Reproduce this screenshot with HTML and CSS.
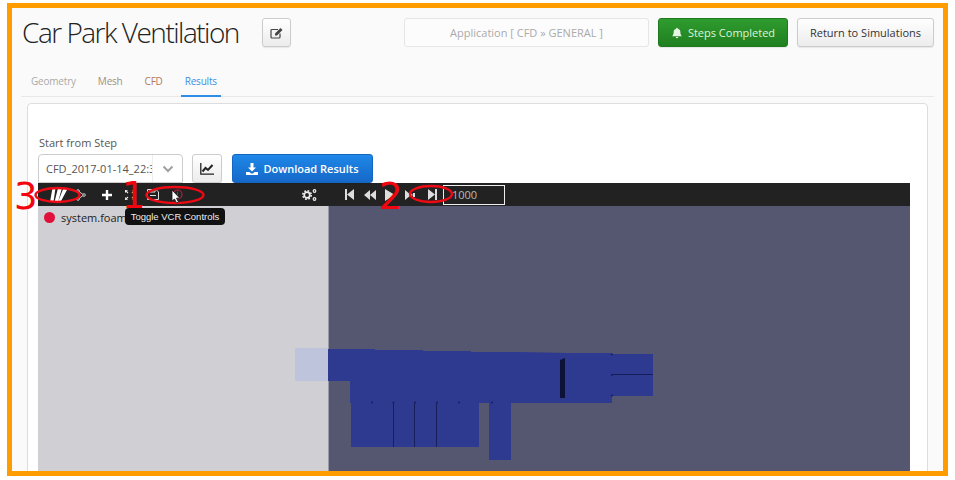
FILE: index.html
```html
<!DOCTYPE html>
<html lang="en">
<head>
<meta charset="utf-8">
<title>Car Park Ventilation</title>
<link rel="stylesheet" href="styles.css">
</head>
<body>
<div class="frame">
  <header class="head">
    <h1 class="title">Car Park Ventilation</h1>
    <button class="btn btn-edit" aria-label="Edit">
      <svg width="14" height="12" viewBox="0 0 14 12"><path d="M10 6.500V10a1 1 0 0 1-1 1H2a1 1 0 0 1-1-1V3.500a1 1 0 0 1 1-1h6" fill="none" stroke="#444" stroke-width="1.200"/><path d="M5 6.500 10.500 1l2 2L7 8.500H5z" fill="#444"/></svg>
    </button>
    <div class="app-field">Application [ CFD » GENERAL ]</div>
    <button class="btn btn-green">
      <svg width="12" height="12" viewBox="0 0 16 16"><path d="M8 1a1.200 1.200 0 0 1 1.100 1.200C11.500 2.800 12.500 4.500 12.500 7c0 2.500.7 4 2 5.200H1.500C2.800 11 3.500 9.500 3.500 7c0-2.500 1-4.200 3.400-4.800A1.200 1.200 0 0 1 8 1zM6.300 13.200h3.400a1.700 1.700 0 0 1-3.400 0z" fill="#e8f5e4"/></svg>
      Steps Completed
    </button>
    <button class="btn btn-return">Return to Simulations</button>
  </header>

  <nav class="tabs">
    <a class="tab tab-geometry">Geometry</a>
    <a class="tab tab-mesh">Mesh</a>
    <a class="tab tab-cfd">CFD</a>
    <a class="tab tab-results">Results</a>
  </nav>

  <main class="panel">
    <div class="label">Start from Step</div>
    <div class="controls">
      <div class="select">
        <span class="select-text">CFD_2017-01-14_22:30:00</span>
        <span class="select-arrow"><svg width="12" height="8" viewBox="0 0 12 8"><path d="M1.500 1.500 6 6l4.500-4.500" fill="none" stroke="#a0a0a0" stroke-width="2"/></svg></span>
      </div>
      <button class="btn btn-chart" aria-label="Chart">
        <svg width="14" height="12" viewBox="0 0 14 12"><path d="M.8 0v11.200H14" fill="none" stroke="#222" stroke-width="1.300"/><path d="M2.500 8.500 5.500 5l2.500 2 4.500-5" fill="none" stroke="#222" stroke-width="2"/></svg>
      </button>
      <button class="btn btn-blue">
        <svg width="12" height="12" viewBox="0 0 12 12"><path d="M4.500 0h3v4.500H10L6 8.500 2 4.500h2.500zM0 9h3.500L5 10.500h2L8.500 9H12v3H0z" fill="#fff"/></svg>
        Download Results
      </button>
    </div>

    <section class="viewer">
      <div class="toolbar">
        <svg class="ti ti-logo" width="18" height="14" viewBox="0 0 18 14"><path d="M2.500 0h3L3.500 14H0zM8 0h4L8 14H4.500zM13.500 0H18L10.500 14H8z" fill="#fff"/></svg>
        <svg class="ti ti-nodes" width="10" height="12" viewBox="0 0 10 12"><g fill="none" stroke="#ccc" stroke-width="1"><circle cx="2" cy="2" r="1.300"/><circle cx="8" cy="6" r="1.300"/><circle cx="2" cy="10" r="1.300"/><path d="M3.200 2.800 6.800 5.200M3.200 9.200 6.800 6.800"/></g></svg>
        <svg class="ti ti-plus" width="10" height="10" viewBox="0 0 10 10"><path d="M3.800 0h2.400v3.800H10v2.400H6.200V10H3.800V6.200H0V3.800h3.800z" fill="#fff"/></svg>
        <svg class="ti ti-expand" width="10" height="10" viewBox="0 0 10 10"><path d="M0 3V0h3M7 0h3v3M10 7v3H7M3 10H0V7M0 0l3 3M10 0 7 3M10 10 7 7M0 10l3-3" fill="none" stroke="#eee" stroke-width="1.100"/></svg>
        <svg class="ti ti-save" width="12" height="11" viewBox="0 0 12 11"><path d="M.5.500h8.500l2.500 2.500v7.500H.5zM3 .5v2.500h5V.5M3 6.500h6" fill="none" stroke="#ddd" stroke-width="1"/></svg>
        <svg class="ti ti-power" width="11" height="11" viewBox="0 0 11 11"><circle cx="5.500" cy="5.500" r="4.500" fill="none" stroke="#b5203c" stroke-width="1.200"/><path d="M5.500 2.500v3.500" stroke="#b5203c" stroke-width="1"/></svg>
        <svg class="ti ti-gears" width="15" height="14" viewBox="0 0 15 14"><g fill="none" stroke="#eee"><circle cx="5" cy="7" r="2.800" stroke-width="1.700"/><circle cx="5" cy="7" r="4.200" stroke-width="1.600" stroke-dasharray="1.800 1.500"/><circle cx="12.500" cy="3" r="1.300" stroke-width="1.200"/><circle cx="12.500" cy="11" r="1.300" stroke-width="1.200"/></g></svg>
        <svg class="ti ti-first" width="9" height="11" viewBox="0 0 9 11"><path d="M0 0h2v11H0zM9 0v11L2 5.500z" fill="#ddd"/></svg>
        <svg class="ti ti-rew" width="12" height="10" viewBox="0 0 12 10"><path d="M6 0v10L0 5zM12 0v10L6 5z" fill="#ddd"/></svg>
        <svg class="ti ti-play" width="10" height="12" viewBox="0 0 10 12"><path d="M0 0l10 6-10 6z" fill="#ddd"/></svg>
        <svg class="ti ti-fwd" width="11" height="10" viewBox="0 0 11 10"><path d="M0 0l6 5-6 5zM6 3.500l2 1.500-2 1.500zM8 3h2v4H8z" fill="#ddd"/></svg>
        <svg class="ti ti-last" width="9" height="11" viewBox="0 0 9 11"><path d="M0 0l7 5.500L0 11zM7 0h2v11H7z" fill="#ddd"/></svg>
        <div class="frame-input">1000</div>
      </div>
      <div class="stage">
        <div class="stage-left">
          <div class="legend"><span class="dot"></span><span class="legend-text">system.foam</span></div>
        </div>
        <div class="stage-right"></div>
        <svg class="model" width="872" height="265" viewBox="38 206 872 265">
          <rect x="295" y="348" width="33" height="33" fill="#bdc4dc"/>
          <path d="M328 349h47v1h48v1h48v1h49l48 1h44v1h41v42h-41v7H350v-22h-22z" fill="#2e3a8f"/>
          <path d="M351 403h128v44H351zM489 403h22v57h-22z" fill="#2e3a8f"/>
          <path d="M393.500 403v44M414.500 403v44M436.500 403v44M612 374.500h41" stroke="#181e5c" stroke-width="1" fill="none"/>
          <path d="M560 360l5-2v40h-5z" fill="#0d1338"/>
          <path d="M371 402.500h2M392.500 402.500h2M414 402.500h2M436 402.500h2M458 402.500h2M491 402.500h2M611 354.500h2M611 375h2M611 395.500h2" stroke="#181e5c" stroke-width="1.500" fill="none"/>
        </svg>
        <div class="tooltip">Toggle VCR Controls</div>
      </div>
    </section>
  </main>
</div>

<svg class="marks" width="955" height="480" viewBox="0 0 955 480">
  <g class="mark-line">
    <ellipse cx="57.500" cy="195" rx="22" ry="7"/>
    <ellipse cx="175" cy="195" rx="28.500" ry="8"/>
    <ellipse cx="431" cy="194" rx="21" ry="8"/>
  </g>
  <text class="mark-num" x="14" y="209">3</text>
  <text class="mark-num" x="122" y="208">1</text>
  <text class="mark-num" x="379" y="209">2</text>
  <path d="M172 190v11l2.500-2 2 4 2-1-2-3.800 3.200-.2z" fill="#fff" stroke="#111" stroke-width=".8"/>
</svg>
</body>
</html>
```

FILE: styles.css
```css
* { box-sizing: border-box; }

html, body { margin: 0; height: 480px; overflow: hidden; background: #fff; }

body {
  position: relative;
  padding: 3px 7px;
  font-family: "Open Sans", "Liberation Sans", sans-serif;
  font-size: 11px;
  color: #333;
}

.frame {
  width: 941px;
  height: 473px;
  padding: 10px 9px 0 9px;
  border: 5px solid #ff9c00;
  background: #fafafa;
  overflow: hidden;
}

.head { display: flex; align-items: center; height: 29px; }

.title {
  margin: 0 0 0 1px;
  width: 217px;
  font-size: 28px;
  font-weight: 300;
  letter-spacing: -1.5px;
  line-height: 29px;
  color: #222;
  white-space: nowrap;
}

.btn {
  display: flex;
  align-items: center;
  justify-content: center;
  gap: 5px;
  height: 29px;
  padding: 0;
  border: 1px solid #ccc;
  border-radius: 3px;
  background: linear-gradient(#fff, #ececec);
  font-family: inherit;
  font-size: 11px;
  color: #333;
  box-shadow: 0 1px 1px rgba(0, 0, 0, .08);
}

.btn-edit { width: 29px; margin-left: 23px; }

.app-field {
  width: 245px;
  height: 29px;
  margin-left: auto;
  border: 1px solid #e6e6e6;
  border-radius: 3px;
  background: #fcfcfc;
  color: #aaa;
  line-height: 27px;
  text-align: center;
}

.btn-green {
  width: 130px;
  margin-left: 9px;
  border-color: #1f7a1f;
  background: linear-gradient(#2f9c2f, #1f7f1f);
  color: #dff3da;
}

.btn-return { width: 137px; margin-left: 9px; }

.tabs {
  display: flex;
  gap: 14px;
  height: 24px;
  margin-top: 26px;
  padding-left: 6px;
  border-bottom: 1px solid #e8e8e8;
}

.tab {
  height: 24px;
  padding: 0 4px;
  font-size: 10px;
  letter-spacing: -.2px;
  line-height: 16px;
  border-bottom: 2px solid transparent;
}

.tab-geometry { color: #aaa; }
.tab-mesh { color: #a08f85; }
.tab-cfd { color: #b07a62; }
.tab-results { color: #3f8fe6; border-bottom-color: #2f8de8; }

.panel {
  height: 400px;
  margin: 6px 6px 0;
  padding: 30px 17px 0 10px;
  border: 1px solid #ddd;
  border-radius: 4px;
  background: #fff;
}

.label {
  height: 17px;
  margin: 0 0 3px 1px;
  font-size: 11px;
  line-height: 17px;
  color: #555;
}

.controls { display: flex; align-items: flex-start; }

.select {
  display: flex;
  width: 145px;
  height: 29px;
  border: 1px solid #ccc;
  border-radius: 4px 4px 0 0;
  background: #fff;
}

.select-text {
  width: 113px;
  padding-left: 7px;
  overflow: hidden;
  color: #555;
  line-height: 27px;
  white-space: nowrap;
}

.select-arrow {
  display: flex;
  flex: 1;
  align-items: center;
  justify-content: center;
  border-left: 1px solid #eee;
}

.btn-chart { width: 30px; margin-left: 9px; }

.btn-blue {
  width: 141px;
  margin-left: 10px;
  border-color: #1665c0;
  background: linear-gradient(#1e88e8, #1568c8);
  color: #fff;
  font-weight: 600;
}

.viewer { width: 872px; }

.toolbar {
  display: flex;
  align-items: center;
  height: 23px;
  background: #222;
}

.ti { flex: none; }
.ti-logo { margin-left: 12px; }
.ti-nodes { margin-left: 8px; }
.ti-plus { margin-left: 16px; }
.ti-expand { margin-left: 13px; }
.ti-save { margin-left: 12px; }
.ti-power { margin-left: 13px; }
.ti-gears { margin-left: 119px; }
.ti-first { margin-left: 28px; }
.ti-rew { margin-left: 10px; }
.ti-play { margin-left: 9px; }
.ti-fwd { margin-left: 10px; }
.ti-last { margin-left: 12px; }

.frame-input {
  width: 62px;
  height: 20px;
  margin-left: 6px;
  padding-left: 8px;
  border: 1px solid #eee;
  color: #bbb;
  line-height: 18px;
}

.stage {
  position: relative;
  display: flex;
  height: 265px;
}

.stage-left { width: 291px; background: #d0cfd4; border-right: 1px solid #9a9aa6; }
.stage-right { flex: 1; background: #55566f; }

.legend { display: flex; align-items: center; gap: 6px; height: 23px; padding-left: 6px; }
.dot { width: 11px; height: 11px; border-radius: 50%; background: #e0103a; }
.legend-text { color: #222; font-size: 11px; }

.model { position: absolute; left: 0; top: 0; }

.tooltip {
  position: absolute;
  left: 87px;
  top: 2px;
  width: 100px;
  height: 17px;
  border-radius: 4px;
  background: #111;
  color: #eee;
  font-family: "Liberation Sans", sans-serif;
  font-size: 9.5px;
  line-height: 17px;
  text-align: center;
}

.marks { position: absolute; left: 0; top: 0; pointer-events: none; }
.mark-line ellipse { fill: none; stroke: #ee0a14; stroke-width: 2.4; }
.mark-num { fill: #f2050f; font-family: "DejaVu Sans", sans-serif; font-size: 37px; }
```
